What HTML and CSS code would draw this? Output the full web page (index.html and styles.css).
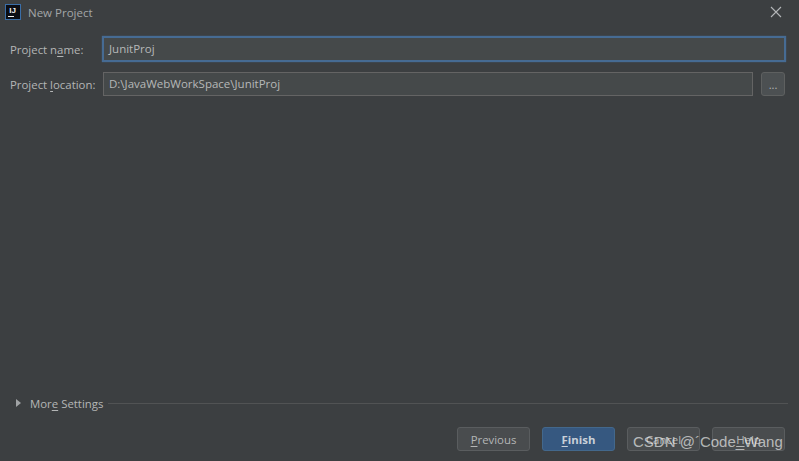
FILE: index.html
```html
<!DOCTYPE html>
<html lang="en">
<head>
  <meta charset="UTF-8" />
  <title>New Project</title>
  <link rel="stylesheet" href="styles.css">
</head>
<body>
  <div class="dialog">
    <div class="title-bar">
      <svg class="app-icon" width="16" height="16" viewBox="0 0 16 16">
        <rect x="0.5" y="0.5" width="15" height="15" fill="#0b0d14" stroke="#3a6ea8"/>
        <text x="7.5" y="9" class="app-icon-text">IJ</text>
        <rect x="3" y="12" width="6" height="1" fill="#f0f0f0"/>
      </svg>
      <span class="title">New Project</span>
      <svg class="close" width="12" height="12" viewBox="0 0 12 12">
        <path d="M1 1 L11 11 M11 1 L1 11" stroke="#b4b6b8" stroke-width="1.1" fill="none"/>
      </svg>
    </div>

    <div class="form">
      <div class="row row-name">
        <label class="label">Project n<u>a</u>me:</label>
        <div class="input input-focus">JunitProj</div>
      </div>
      <div class="row row-location">
        <label class="label">Project <u>l</u>ocation:</label>
        <div class="input">D:\JavaWebWorkSpace\JunitProj</div>
        <button class="browse">...</button>
      </div>
    </div>

    <div class="more">
      <span class="arrow"></span>
      <span class="more-text">Mor<u>e</u> Settings</span>
      <span class="more-line"></span>
    </div>

    <div class="footer">
      <button class="btn"><u>P</u>revious</button>
      <button class="btn btn-primary"><u>F</u>inish</button>
      <button class="btn">Cancel</button>
      <button class="btn"><u>H</u>elp</button>
    </div>
  </div>
  <div class="watermark">CSDN @´Code_Wang</div>
</body>
</html>
```

FILE: styles.css
```css
:root {
  --bg-color: #3c3f41;
  --text-color: #b4b6b6;
  --field-bg: #45494a;
  --field-border: #646464;
  --focus-color: #466b93;
  --font-primary: 'Open Sans', sans-serif;
}

* {
  box-sizing: border-box;
  margin: 0;
  padding: 0;
  font-family: var(--font-primary);
}

html, body {
  width: 799px;
  height: 461px;
  overflow: hidden;
}

body {
  position: relative;
  background-color: var(--bg-color);
  color: var(--text-color);
  font-size: 11.4px;
}

u {
  text-underline-offset: 2px;
}

.dialog {
  display: flex;
  flex-direction: column;
  height: 100%;
}

.title-bar {
  display: flex;
  align-items: center;
  height: 24px;
  padding: 0 17px 0 5px;
}

.app-icon {
  flex: none;
}

.app-icon-text {
  font-family: 'Liberation Sans', sans-serif;
  font-size: 8px;
  font-weight: 700;
  fill: #f0f0f0;
  text-anchor: middle;
}

.title {
  margin-left: 7px;
  flex: 1;
  font-size: 11.5px;
  color: #a3a6a7;
}

.form {
  display: flex;
  flex-direction: column;
  gap: 10px;
  padding: 12px 14px 0 10px;
}

.row {
  display: flex;
  align-items: center;
}

.label {
  width: 93px;
  flex: none;
}

.input {
  flex: 1;
  height: 24px;
  line-height: 21px;
  padding-left: 5px;
  background-color: var(--field-bg);
  border: 1px solid var(--field-border);
  color: #b6b8b8;
  font-size: 11.5px;
}

.input-focus {
  height: 26px;
  margin-right: -1px;
  margin-left: -1px;
  border: 2px solid var(--focus-color);
  box-shadow: 0 0 1px #466b93;
}

.browse {
  flex: none;
  width: 24px;
  height: 24px;
  margin-left: 8px;
  background-color: #4c5052;
  border: 1px solid #5e6060;
  border-radius: 3px;
  color: var(--text-color);
  font-size: 11px;
}

.more {
  display: flex;
  align-items: center;
  margin-top: auto;
  height: 16px;
  padding: 0 11px 0 16px;
}

.arrow {
  width: 0;
  height: 0;
  border-left: 5px solid #a0a3a5;
  border-top: 4.5px solid transparent;
  border-bottom: 4.5px solid transparent;
}

.more-text {
  margin-left: 9px;
}

.more-line {
  flex: 1;
  height: 1px;
  margin-left: 5px;
  background-color: #515354;
}

.footer {
  display: flex;
  justify-content: flex-end;
  gap: 12px;
  padding: 16px 14px 10px 0;
}

.btn {
  width: 73px;
  height: 24px;
  background-color: #494c4e;
  border: 1px solid #5a5d5f;
  border-radius: 3px;
  color: var(--text-color);
  font-size: 11.4px;
}

.btn-primary {
  background-color: #365880;
  border-color: #43688c;
  color: #c8d0d8;
  font-weight: 700;
}

.watermark {
  position: absolute;
  left: 633px;
  top: 432px;
  font-family: 'Liberation Sans', sans-serif;
  font-size: 15px;
  line-height: 20px;
  color: rgba(255, 255, 255, 0.62);
  white-space: nowrap;
}
```
